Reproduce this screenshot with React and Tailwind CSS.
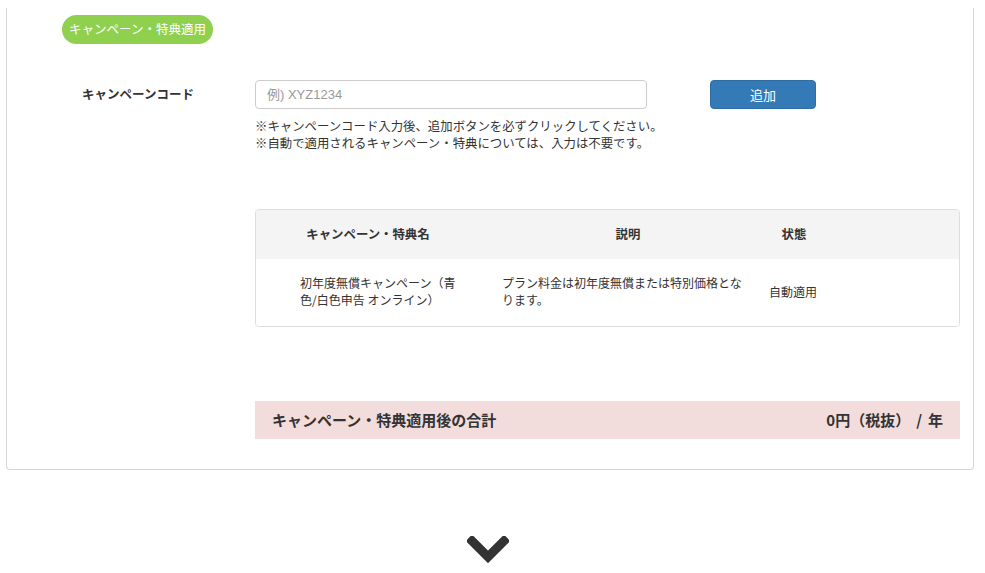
import React from 'react';

const font = { fontFamily: '"Noto Sans CJK JP", "Noto Sans", sans-serif' };

const rows = [
  {
    name: '初年度無償キャンペーン（青色/白色申告 オンライン）',
    desc: 'プラン料金は初年度無償または特別価格となります。',
    status: '自動適用',
  },
];

export default function App() {
  return (
    <div className="w-[985px] h-[573px] overflow-hidden bg-white text-[#333]" style={font}>
      <div className="ml-[6px] mt-2 w-[968px] border border-t-0 border-[#d6d6d6] rounded-b pt-[7px] pb-[30px]">
        <div className="ml-[55px] inline-flex items-center h-[29px] px-[7px] rounded-full bg-[#8fd14f] text-white text-[12.5px]">
          キャンペーン・特典適用
        </div>

        <div className="flex mt-[36px]">
          <div className="w-[248px] pl-[75px] pt-[5px] text-[12.5px] font-bold">キャンペーンコード</div>
          <div className="flex-1 pr-[13px]">
            <div className="flex items-center">
              <input
                placeholder="例) XYZ1234"
                className="w-[392px] h-[29px] border border-[#ccc] rounded px-[11px] text-[13px] placeholder:text-[#999] outline-none"
                style={{ fontFamily: '"Liberation Sans", "Noto Sans CJK JP", sans-serif' }}
              />
              <button className="ml-[63px] w-[106px] h-[29px] rounded bg-[#337ab7] border border-[#2e6da4] text-white text-[13px]">
                追加
              </button>
            </div>
            <div className="mt-[9px] text-[12.4px] leading-[17px]">
              <p>※キャンペーンコード入力後、追加ボタンを必ずクリックしてください。</p>
              <p>※自動で適用されるキャンペーン・特典については、入力は不要です。</p>
            </div>

            <div className="mt-[57px] border border-[#ddd] rounded overflow-hidden">
              <div className="grid grid-cols-[224px_280px_68px_1fr] h-[49px] bg-[#f4f4f4] items-center text-[12.4px] font-bold">
                <div className="text-center">キャンペーン・特典名</div>
                <div className="text-center pl-[16px]">説明</div>
                <div className="text-center">状態</div>
                <div />
              </div>
              {rows.map((r) => (
                <div key={r.name} className="grid grid-cols-[224px_280px_68px_1fr] h-[67px] items-center text-[12px] leading-[17px] bg-white pb-[3px]">
                  <div className="pl-[44px] pr-[18px]">{r.name}</div>
                  <div className="pl-[22px] pr-[12px]">{r.desc}</div>
                  <div className="pl-[9px] whitespace-nowrap">{r.status}</div>
                  <div />
                </div>
              ))}
            </div>

            <div className="mt-[74px] h-[38px] bg-[#f2dcdc] flex items-center justify-between px-[17px] text-[15px] font-bold">
              <span>キャンペーン・特典適用後の合計</span>
              <span>0円（税抜）<span className="mx-[6px]">/</span>年</span>
            </div>
          </div>
        </div>
      </div>

      <div className="flex justify-center mt-[66px] pr-[10px]">
        <svg width="42" height="28" viewBox="0 0 42 28">
          <polyline points="5,5 21,21 37,5" fill="none" stroke="#333" strokeWidth="9" strokeLinecap="square" />
        </svg>
      </div>
    </div>
  );
}
